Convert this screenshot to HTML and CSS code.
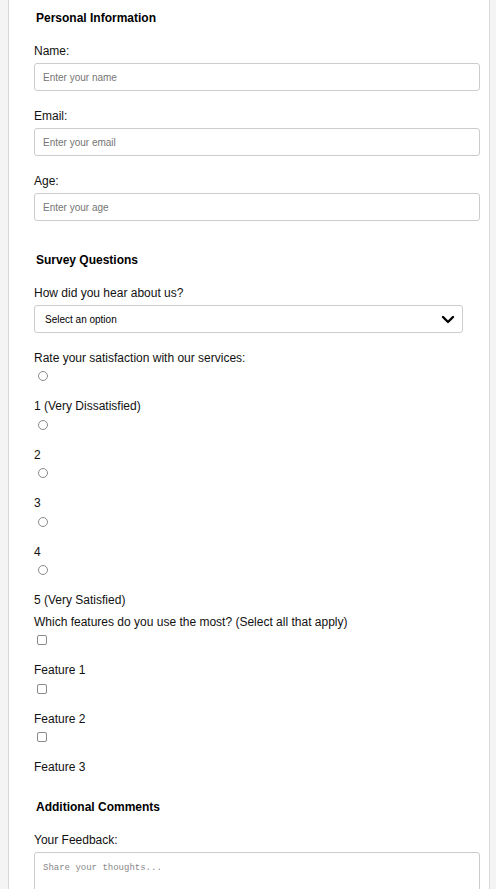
FILE: index.html
```html
<!DOCTYPE html>
<html lang="en">
<head>
<meta charset="utf-8">
<title>Survey</title>
<link rel="stylesheet" href="styles.css">
</head>
<body>
<form class="survey">
  <section class="section">
    <h2 class="section-title">Personal Information</h2>
    <div class="field">
      <label class="label" for="name">Name:</label>
      <input class="text-input" id="name" type="text" placeholder="Enter your name">
    </div>
    <div class="field">
      <label class="label" for="email">Email:</label>
      <input class="text-input" id="email" type="email" placeholder="Enter your email">
    </div>
    <div class="field">
      <label class="label" for="age">Age:</label>
      <input class="text-input" id="age" type="number" placeholder="Enter your age">
    </div>
  </section>

  <section class="section">
    <h2 class="section-title section-title--gap">Survey Questions</h2>
    <div class="field">
      <label class="label" for="source">How did you hear about us?</label>
      <div class="select-wrap">
        <select class="select" id="source">
          <option>Select an option</option>
        </select>
        <svg class="chevron" width="14" height="9" viewBox="0 0 14 9" aria-hidden="true">
          <polyline points="2,2 7,7 12,2" fill="none" stroke="#000" stroke-width="2.4" stroke-linecap="round" stroke-linejoin="round"/>
        </svg>
      </div>
    </div>

    <div class="group group--radio">
      <div class="label">Rate your satisfaction with our services:</div>
      <label class="option"><input class="radio" type="radio" name="rate"><span class="option-text">1 (Very Dissatisfied)</span></label>
      <label class="option"><input class="radio" type="radio" name="rate"><span class="option-text">2</span></label>
      <label class="option"><input class="radio" type="radio" name="rate"><span class="option-text">3</span></label>
      <label class="option"><input class="radio" type="radio" name="rate"><span class="option-text">4</span></label>
      <label class="option"><input class="radio" type="radio" name="rate"><span class="option-text">5 (Very Satisfied)</span></label>
    </div>

    <div class="group">
      <div class="label">Which features do you use the most? (Select all that apply)</div>
      <label class="option"><input class="checkbox" type="checkbox"><span class="option-text">Feature 1</span></label>
      <label class="option"><input class="checkbox" type="checkbox"><span class="option-text">Feature 2</span></label>
      <label class="option"><input class="checkbox" type="checkbox"><span class="option-text">Feature 3</span></label>
    </div>
  </section>

  <section class="section">
    <h2 class="section-title section-title--last">Additional Comments</h2>
    <div class="field">
      <label class="label" for="feedback">Your Feedback:</label>
      <textarea class="textarea" id="feedback" placeholder="Share your thoughts..."></textarea>
    </div>
  </section>
</form>
</body>
</html>
```

FILE: styles.css
```css
html, body {
  margin: 0;
  padding: 0;
}

body {
  background: #f4f4f4;
  padding-left: 8px;
  font-family: "Liberation Sans", Arial, sans-serif;
  font-size: 12px;
  color: #111;
}

.survey {
  display: flow-root;
  width: 455px;
  padding: 0 0 0 25px;
  background: #fff;
  border: 1px solid #d8d8d8;
  border-top: 0;
  min-height: 900px;
}

.section-title {
  margin: 11px 0 19px 2px;
  padding-top: 1px;
  font-size: 12px;
  line-height: 13px;
  font-weight: bold;
  color: #000;
}

.section-title--gap {
  margin-top: 32px;
}

.section-title--last {
  margin-top: 25.5px;
}

.field {
  margin-bottom: 18px;
}

.label {
  display: block;
  padding-top: 1px;
  line-height: 13px;
  margin-bottom: 5px;
  color: #111;
}

.group .label {
  margin-bottom: 0;
}

.text-input {
  display: block;
  box-sizing: border-box;
  width: 446px;
  height: 28px;
  margin: 0;
  padding: 0 8px;
  border: 1px solid #ccc;
  border-radius: 3px;
  background: #fff;
  font-family: "Liberation Sans", Arial, sans-serif;
  font-size: 10px;
  color: #111;
}

.text-input::placeholder {
  color: #757575;
}

.select-wrap {
  position: relative;
  width: 429px;
}

.select {
  display: block;
  box-sizing: border-box;
  width: 429px;
  height: 28px;
  margin: 0;
  padding: 0 10px;
  border: 1px solid #ccc;
  border-radius: 3px;
  background: #fff;
  font-family: "Liberation Sans", Arial, sans-serif;
  font-size: 10px;
  color: #000;
  appearance: none;
  -webkit-appearance: none;
}

.chevron {
  position: absolute;
  left: 407px;
  top: 10px;
}

.group--radio {
  margin-bottom: 7.5px;
}

.option {
  display: block;
}

.radio,
.checkbox {
  display: block;
  box-sizing: border-box;
  width: 10px;
  height: 10px;
  margin: 6px 0 18px 4px;
  border: 1px solid #8a8a8a;
  background: #fff;
  appearance: none;
  -webkit-appearance: none;
}

.radio {
  border-radius: 50%;
}

.checkbox {
  border-radius: 2px;
  margin-left: 3px;
}

.option-text {
  display: block;
  padding-top: 1px;
  line-height: 13.5px;
}

.textarea {
  display: block;
  box-sizing: border-box;
  width: 446px;
  height: 90px;
  margin: 0;
  padding: 10px 8px 8px;
  border: 1px solid #ccc;
  border-radius: 3px;
  font-family: "Liberation Mono", "DejaVu Sans Mono", monospace;
  font-size: 9px;
  line-height: 11px;
  resize: vertical;
}

.textarea::placeholder {
  color: #888;
}
```
